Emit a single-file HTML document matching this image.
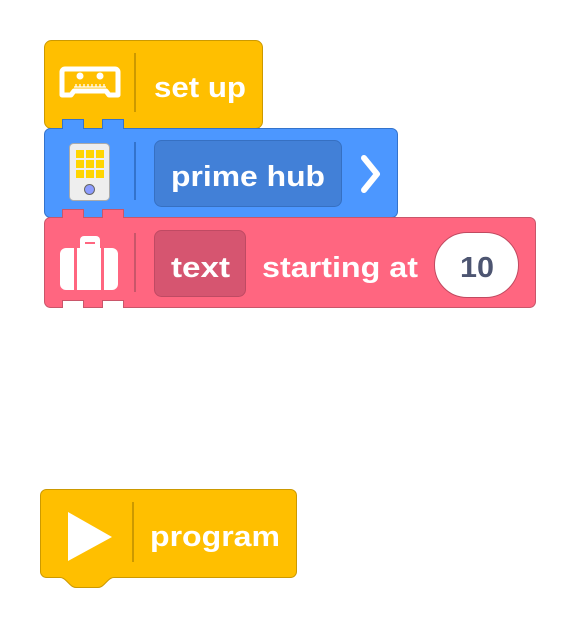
<!DOCTYPE html>
<html><head><style>
html,body{margin:0;padding:0;background:#fff;width:575px;height:629px;overflow:hidden}
svg text{font-family:"Liberation Sans",sans-serif;font-weight:bold;fill:#fff}
</style></head><body>
<svg width="575" height="629" viewBox="0 0 575 629" xmlns="http://www.w3.org/2000/svg">
<!-- set up -->
<rect x="44.5" y="40.5" width="218" height="88" rx="7" fill="#ffbf00" stroke="#cc9900"/>
<line x1="135" y1="53" x2="135" y2="112" stroke="#cc9900" stroke-width="2"/>
<path d="M65 69 h50 a3 3 0 0 1 3 3 v23 h-9 l-3 -4 h-32 l-3 4 h-9 v-23 a3 3 0 0 1 3 -3z" fill="none" stroke="#fff" stroke-width="5" stroke-linejoin="round"/>
<circle cx="80" cy="76" r="3.5" fill="#fff"/><circle cx="100" cy="76" r="3.5" fill="#fff"/>
<path d="M74 87h32M76 84v3M80 84v3M84 84v3M88 84v3M92 84v3M96 84v3M100 84v3M104 84v3" stroke="#fff" stroke-width="1.3"/>
<text x="154" y="97" font-size="29" textLength="92" lengthAdjust="spacingAndGlyphs">set up</text>
<!-- blue -->
<path d="M50.5 128.5 H62.5 V119.5 H83.5 V128.5 H102.5 V119.5 H123.5 V128.5 H391.5 a6 6 0 0 1 6 6 V211.5 a6 6 0 0 1 -6 6 H50.5 a6 6 0 0 1 -6 -6 V134.5 a6 6 0 0 1 6 -6z" fill="#4c97ff" stroke="#3373cc"/>
<line x1="135" y1="142" x2="135" y2="200" stroke="#3373cc" stroke-width="2"/>
<rect x="69.5" y="143.5" width="40" height="57" rx="4" fill="#eeeeee" stroke="#aaa"/>
<g fill="#ffd500">
<rect x="76" y="150" width="8" height="8"/><rect x="86" y="150" width="8" height="8"/><rect x="96" y="150" width="8" height="8"/>
<rect x="76" y="160" width="8" height="8"/><rect x="86" y="160" width="8" height="8"/><rect x="96" y="160" width="8" height="8"/>
<rect x="76" y="170" width="8" height="8"/><rect x="86" y="170" width="8" height="8"/><rect x="96" y="170" width="8" height="8"/>
</g>
<circle cx="89.5" cy="189.5" r="5" fill="#8c9cff" stroke="#666"/>
<rect x="154.5" y="140.5" width="187" height="66" rx="7" fill="#4280d7" stroke="#3670c2"/>
<text x="171" y="186" font-size="29" textLength="154" lengthAdjust="spacingAndGlyphs">prime hub</text>
<path d="M364 158 L377 174 L364 190" fill="none" stroke="#fff" stroke-width="6" stroke-linecap="round" stroke-linejoin="round"/>
<!-- red -->
<path d="M50.5 217.5 H62.5 V209.5 H83.5 V217.5 H102.5 V209.5 H123.5 V217.5 H529.5 a6 6 0 0 1 6 6 V301.5 a6 6 0 0 1 -6 6 H123.5 V300.5 H102.5 V307.5 H83.5 V300.5 H62.5 V307.5 H50.5 a6 6 0 0 1 -6 -6 V223.5 a6 6 0 0 1 6 -6z" fill="#ff6680" stroke="#c9566a"/>
<line x1="135" y1="233" x2="135" y2="292" stroke="#c9566a" stroke-width="2"/>
<rect x="80" y="236" width="20" height="54" rx="4" fill="#fff"/>
<rect x="60" y="248" width="58" height="42" rx="6" fill="#fff"/>
<rect x="74" y="248" width="3" height="42" fill="#ff6680"/><rect x="101" y="248" width="3" height="42" fill="#ff6680"/>
<rect x="85" y="242" width="10" height="2" fill="#ff6680"/>
<rect x="154.5" y="230.5" width="91" height="66" rx="7" fill="#d65570" stroke="#bf4a63"/>
<text x="171" y="277" font-size="29" textLength="59" lengthAdjust="spacingAndGlyphs">text</text>
<text x="262" y="277" font-size="29" textLength="156" lengthAdjust="spacingAndGlyphs">starting at</text>
<rect x="434.5" y="232.5" width="84" height="65" rx="32.5" fill="#fff" stroke="#c04a60"/>
<text x="460" y="277" font-size="29" textLength="34" lengthAdjust="spacingAndGlyphs" style="fill:#4d5571">10</text>
<!-- program -->
<path d="M46.5 489.5 H290.5 a6 6 0 0 1 6 6 V571.5 a6 6 0 0 1 -6 6 H114 q-3 0 -6 3 l-4 4 q-3 3 -6 3 H76 q-3 0 -6 -3 l-4 -4 q-3 -3 -6 -3 H46.5 a6 6 0 0 1 -6 -6 V495.5 a6 6 0 0 1 6 -6z" fill="#ffbf00" stroke="#cc9900"/>
<line x1="133" y1="502" x2="133" y2="562" stroke="#cc9900" stroke-width="2"/>
<path d="M68 512 L112 537 L68 561z" fill="#fff"/>
<text x="150" y="546" font-size="29" textLength="130" lengthAdjust="spacingAndGlyphs">program</text>
</svg>
</body></html>
